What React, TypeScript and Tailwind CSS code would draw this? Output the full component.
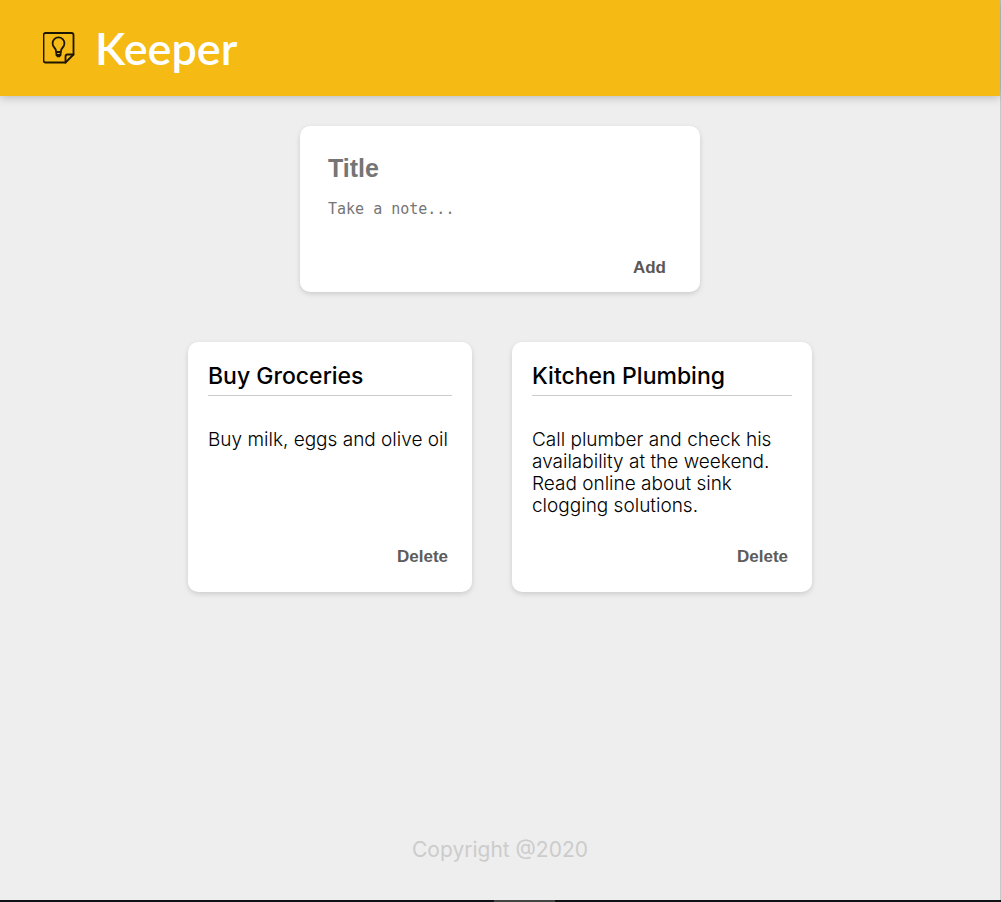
import React from "react";

type NoteData = { title: string; content: string; width: string };

const notes: NoteData[] = [
  {
    title: "Buy Groceries",
    content: "Buy milk, eggs and olive oil",
    width: "w-[284px]",
  },
  {
    title: "Kitchen Plumbing",
    content:
      "Call plumber and check his availability at the weekend. Read online about sink clogging solutions.",
    width: "w-[300px]",
  },
];

function NoteIcon() {
  return (
    <svg
      className="size-8 shrink-0"
      viewBox="0 0 32 32"
      fill="none"
      stroke="#1d1603"
      strokeWidth="1.8"
      strokeLinejoin="round"
      strokeLinecap="round"
      aria-hidden="true"
    >
      <path d="M2.500 1h26a2 2 0 0 1 2 2v19.500l-8 8h-20a2 2 0 0 1-2-2V3a2 2 0 0 1 2-2Z" />
      <path d="M30.500 22.500h-6a2 2 0 0 0-2 2v6" />
      <path d="M13.200 20c0-2.300-.6-3.200-1.900-4.500a5.900 5.900 0 1 1 8.400 0c-1.300 1.300-1.900 2.200-1.900 4.500Z" />
      <path d="M13.400 20v3h4.200v-3M14.400 24.300h2.200" />
    </svg>
  );
}

function Header() {
  return (
    <header className="flex h-24 shrink-0 items-center gap-5 bg-[#f5ba13] pb-px pl-[43px] shadow-[0_0_10px_0_rgba(0,0,0,0.3)]">
      <NoteIcon />
      <h1 className="pt-px font-['Lato',sans-serif] text-[45px] leading-[54px] font-semibold text-white">
        Keeper
      </h1>
    </header>
  );
}

function CreateArea() {
  return (
    <form
      className="mx-auto mt-[30px] flex w-[400px] max-w-full flex-col rounded-[10px] bg-white px-7 pt-6 pb-3 shadow-[0_2px_5px_#ccc]"
      onSubmit={(e) => e.preventDefault()}
    >
      <input
        aria-label="Title"
        placeholder="Title"
        className="h-[37px] w-full font-['Liberation_Sans',sans-serif] text-[25px] font-bold outline-none placeholder:text-[#757575]"
      />
      <textarea
        aria-label="Note"
        placeholder="Take a note..."
        rows={2}
        className="mt-[11px] h-[46px] w-full resize-none font-['DejaVu_Sans_Mono',monospace] text-[15px] leading-[22px] outline-none placeholder:text-[#757575]"
      />
      <button
        type="submit"
        className="mt-3 mr-1.5 self-end font-['Liberation_Sans',sans-serif] text-[17px] leading-6 font-bold text-[#5c5757]"
      >
        Add
      </button>
    </form>
  );
}

function Note({ title, content, width }: NoteData) {
  return (
    <article
      className={`${width} flex min-h-[250px] flex-col rounded-[10px] bg-white p-5 shadow-[0_2px_5px_#ccc]`}
    >
      <h2 className="border-b border-[#ccc] pb-[5px] text-[23px] leading-7 font-medium">
        {title}
      </h2>
      <p className="mt-[33px] text-[19px] leading-[22px] font-light">
        {content}
      </p>
      <button
        type="button"
        className="mt-auto mr-1 mb-[3px] self-end font-['Liberation_Sans',sans-serif] text-[17px] leading-6 font-bold text-[#5c5c5c]"
      >
        Delete
      </button>
    </article>
  );
}

export default function App() {
  return (
    <div className="flex min-h-screen flex-col border-r border-[#c8c8c8] bg-[#eee] font-['Inter',sans-serif] text-black">
      <Header />
      <main>
        <CreateArea />
        <section
          aria-label="Notes"
          className="mt-[50px] flex flex-wrap justify-center gap-10"
        >
          {notes.map((note) => (
            <Note key={note.title} {...note} />
          ))}
        </section>
      </main>
      <footer className="mt-auto">
        <p className="pb-9 text-center text-[21px] leading-7 text-[#ccc]">
          Copyright @2020
        </p>
        <div className="-mr-px flex h-0.5 justify-center bg-[#111014]">
          <div className="ml-12 w-[61px] bg-[#444]" />
        </div>
      </footer>
    </div>
  );
}
